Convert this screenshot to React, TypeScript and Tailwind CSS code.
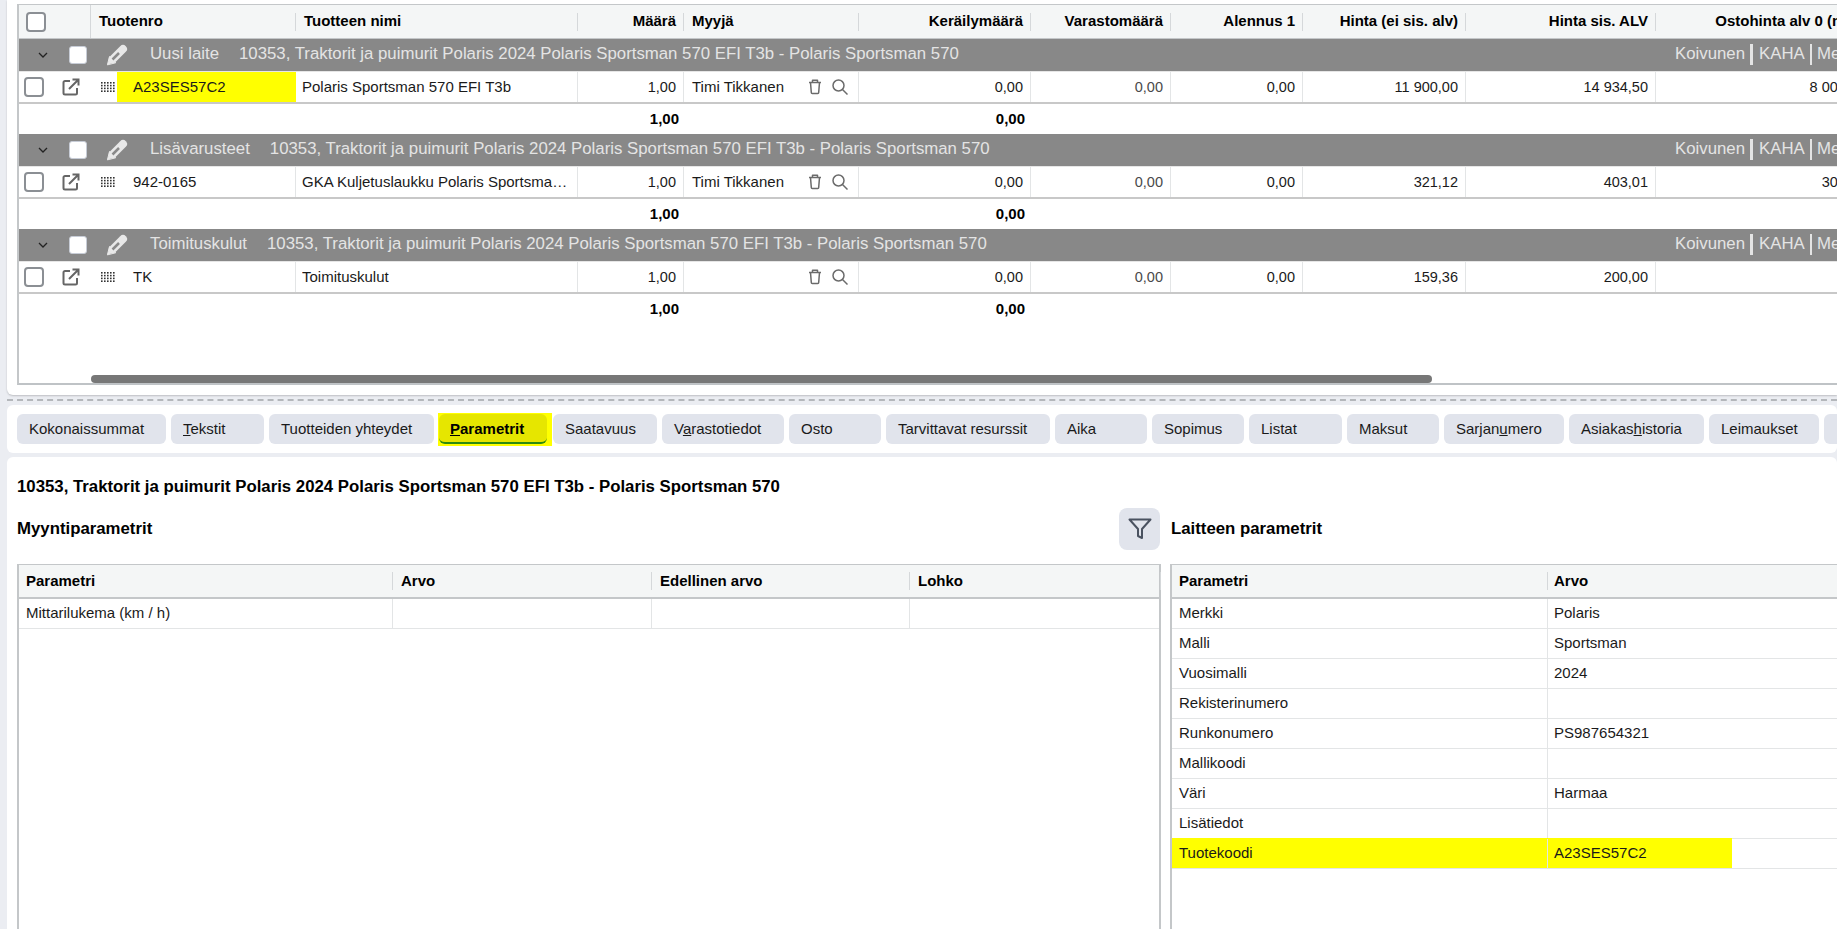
import type { ReactNode } from "react";

const topGrid =
  "grid grid-cols-[72px_205px_282px_106px_175px_172px_140px_132px_163px_190px_218px] w-[1855px]";
const leftGrid = "grid grid-cols-[374px_259px_258px_251px]";
const rightGrid = "grid grid-cols-[376px_1fr]";

const description = "10353, Traktorit ja puimurit Polaris 2024 Polaris Sportsman 570 EFI T3b - Polaris Sportsman 570";

const groups = [
  {
    label: "Uusi laite",
    code: "A23SES57C2",
    name: "Polaris Sportsman 570 EFI T3b",
    seller: "Timi Tikkanen",
    price: "11 900,00",
    gross: "14 934,50",
    cost: "8 000,00",
    mark: true,
  },
  {
    label: "Lisävarusteet",
    code: "942-0165",
    name: "GKA Kuljetuslaukku Polaris Sportsman 570",
    seller: "Timi Tikkanen",
    price: "321,12",
    gross: "403,01",
    cost: "300,00",
    mark: false,
  },
  {
    label: "Toimituskulut",
    code: "TK",
    name: "Toimituskulut",
    seller: "",
    price: "159,36",
    gross: "200,00",
    cost: "",
    mark: false,
  },
];

const tabs: { text: ReactNode; width: string; active?: boolean }[] = [
  { text: "Kokonaissummat", width: "w-[149px]" },
  { text: <><u>T</u>ekstit</>, width: "w-[93px]" },
  { text: "Tuotteiden yhteydet", width: "w-[165px]" },
  { text: <><u>P</u>arametrit</>, width: "w-[108px]", active: true },
  { text: "Saatavuus", width: "w-[104px]" },
  { text: <>V<u>a</u>rastotiedot</>, width: "w-[122px]" },
  { text: "Osto", width: "w-[92px]" },
  { text: "Tarvittavat resurssit", width: "w-[164px]" },
  { text: "Aika", width: "w-[92px]" },
  { text: "Sopimus", width: "w-[92px]" },
  { text: "Listat", width: "w-[93px]" },
  { text: "Maksut", width: "w-[92px]" },
  { text: <>Sarjan<u>u</u>mero</>, width: "w-[120px]" },
  { text: <>Asiakas<u>h</u>istoria</>, width: "w-[135px]" },
  { text: "Leimaukset", width: "w-[110px]" },
  { text: "", width: "w-[92px]" },
];

const deviceParams = [
  ["Merkki", "Polaris"],
  ["Malli", "Sportsman"],
  ["Vuosimalli", "2024"],
  ["Rekisterinumero", ""],
  ["Runkonumero", "PS987654321"],
  ["Mallikoodi", ""],
  ["Väri", "Harmaa"],
  ["Lisätiedot", ""],
  ["Tuotekoodi", "A23SES57C2"],
];

function Check({ white }: { white?: boolean }) {
  return (
    <span
      className={
        white
          ? "block w-[18px] h-[18px] rounded-[3px] bg-white border border-[#c7ccd6]"
          : "block w-5 h-5 rounded-[4px] bg-white border-2 border-[#8b8f94]"
      }
    />
  );
}

function Pencil() {
  return (
    <svg width="22" height="22" viewBox="0 0 22 22" fill="none" strokeLinecap="round">
      <path d="M1.500 20.500L3.500 12.500L9.500 18.500z" fill="#e8e8e8" stroke="#e8e8e8" strokeLinejoin="round" />
      <path d="M7 15L17 5" stroke="#e8e8e8" strokeWidth="8" />
      <path d="M6.500 15.500L13 9" stroke="#8a8a8a" strokeWidth="2.500" strokeLinecap="butt" />
    </svg>
  );
}

function LinkOut() {
  return (
    <svg width="18" height="18" viewBox="0 0 18 18" fill="none" stroke="#666" strokeWidth="2">
      <path d="M8 3H3a1.500 1.500 0 0 0-1.500 1.500v10.500A1.500 1.500 0 0 0 3 16.500h10.500A1.500 1.500 0 0 0 15 15v-5" />
      <path d="M7 11L16 2M10.500 1.500h6v6" />
    </svg>
  );
}

function Grip() {
  return (
    <svg width="14" height="10" viewBox="0 0 14 10" fill="#333">
      {[0, 3, 6, 9, 12].map((x) =>
        [0, 2.800, 5.600, 8.400].map((y) => <rect key={`${x}-${y}`} x={x} y={y} width="1.600" height="1.600" />)
      )}
    </svg>
  );
}

function Trash() {
  return (
    <svg width="14" height="16" viewBox="0 0 14 16" fill="none" stroke="#6b6b6b" strokeWidth="1.500" strokeLinejoin="round">
      <path d="M1 3.500h12M4.500 3.500V1.200h5v2.300M2.500 3.500l.8 10a1 1 0 0 0 1 1h5.400a1 1 0 0 0 1-1l.8-10" />
    </svg>
  );
}

function Search() {
  return (
    <svg width="16" height="16" viewBox="0 0 16 16" fill="none" stroke="#6b6b6b" strokeWidth="1.500">
      <circle cx="6.500" cy="6.500" r="5.500" />
      <path d="M10.500 10.500L15.500 15.500" />
    </svg>
  );
}

function Funnel() {
  return (
    <svg width="24" height="22" viewBox="0 0 24 22" fill="none" stroke="#4a5260" strokeWidth="2" strokeLinejoin="round">
      <path d="M1.500 1.500h21L14 11v9l-4-2V11z" />
    </svg>
  );
}

function GroupBlock({ group }: { group: (typeof groups)[number] }) {
  const cell = "h-[30px] flex items-center border-r border-[#e3e5e6] text-[15px] text-[#1a1a1a]";
  const num = "h-[30px] flex items-center justify-end pr-[7px] pt-[1px] border-r border-[#e3e5e6] text-[14.5px] text-[#1a1a1a]";
  return (
    <div>
      <div className="h-[32px] w-[1855px] bg-[#888888] flex items-center text-[#e4e4e4] text-[16.8px]">
        <span className="w-[20px] ml-[19px] mr-[11px] flex justify-start">
          <svg width="10" height="6" viewBox="0 0 10 6" fill="none" stroke="#222" strokeWidth="1.300">
            <path d="M1 1l4 4 4-4" />
          </svg>
        </span>
        <Check white />
        <span className="ml-[19px] mr-[22px]">
          <Pencil />
        </span>
        <span className="mr-[20px] pb-[2px]">{group.label}</span>
        <span className="pb-[2px]">{description}</span>
        <span className="ml-auto flex items-center w-[199px] pb-[2px]">
          <span className="w-[75px]">Koivunen</span>
          <span className="h-[21px] w-[3px] bg-[#e4e4e4] mr-[6px]" />
          <span className="w-[51px]">KAHA</span>
          <span className="h-[21px] w-[2px] bg-[#e4e4e4] mr-[5px]" />
          <span>Merkki</span>
        </span>
      </div>
      <div className={`${topGrid} bg-white border-t border-[#e6e6e6] border-b-2 border-b-[#c8c8c8]`}>
        <div className="h-[30px] flex items-center pl-[5px] gap-[18px]">
          <Check />
          <LinkOut />
        </div>
        <div className={cell}>
          <span className="ml-[10px] mr-[2px]">
            <Grip />
          </span>
          <span
            className={
              group.mark
                ? "relative -mr-px bg-[#ffff00] h-[30px] flex-1 flex items-center pl-[16px]"
                : "flex-1 pl-[16px]"
            }
          >
            {group.code}
          </span>
        </div>
        <div className={`${cell} pl-[6px] pr-[8px]`}>
          <span className="truncate">{group.name}</span>
        </div>
        <div className={num}>1,00</div>
        <div className={`${cell} pl-[8px] justify-between pr-[10px]`}>
          <span>{group.seller}</span>
          <span className="flex items-center gap-[10px]">
            <Trash />
            <Search />
          </span>
        </div>
        <div className={num}>0,00</div>
        <div className="h-[30px] flex items-center justify-end pr-[7px] pt-[1px] border-r border-[#e3e5e6] text-[14.5px] text-[#4a4a4a]">0,00</div>
        <div className={num}>0,00</div>
        <div className={num}>{group.price}</div>
        <div className={num}>{group.gross}</div>
        <div className={num}>{group.cost}</div>
      </div>
      <div className={`${topGrid} h-[30px] items-center font-bold text-[15px] text-black`}>
        <span className="col-start-4 text-right pr-[5px]">1,00</span>
        <span className="col-start-6 text-right pr-[6px]">0,00</span>
      </div>
    </div>
  );
}

function HeaderCell({
  children,
  right,
  noLine,
  short,
  pad = "pl-[8px]",
}: {
  children?: ReactNode;
  right?: boolean;
  noLine?: boolean;
  short?: boolean;
  pad?: string;
}) {
  return (
    <div className={`${short ? "h-[32px]" : "h-[33px]"} flex items-center`}>
      <span className={`flex-1 whitespace-nowrap overflow-hidden ${right ? "text-right pr-[7px]" : pad}`}>
        {children}
      </span>
      {!noLine && <span className="h-[18px] w-px bg-[#d5d8da] shrink-0" />}
    </div>
  );
}

export default function App() {
  return (
    <div className="h-[929px] w-full overflow-hidden bg-[#ebedf2] pl-[7px] font-['Liberation_Sans',Arial,sans-serif] text-[15px] text-[#1a1a1a]">
      {/* orders panel */}
      <div className="h-[395px] bg-white rounded-bl-[6px] pl-[10px] pt-[4px] pb-[10px] shadow-[0_1px_2px_rgba(0,0,0,0.2)]">
        <div className="h-[381px] relative overflow-hidden border-t border-t-[#c4c7c9] border-l-2 border-l-[#c4c7c9] border-b-2 border-b-[#bfc3c6]">
          <div className={`${topGrid} bg-[#f4f6f6] border-b border-b-[#c4c7c9] font-bold text-[15px] text-black`}>
            <div className="h-[33px] flex items-center pl-[7px] border-r border-[#d5d8da]">
              <Check />
            </div>
            <HeaderCell>Tuotenro</HeaderCell>
            <HeaderCell>Tuotteen nimi</HeaderCell>
            <HeaderCell right>Määrä</HeaderCell>
            <HeaderCell>Myyjä</HeaderCell>
            <HeaderCell right>Keräilymäärä</HeaderCell>
            <HeaderCell right>Varastomäärä</HeaderCell>
            <HeaderCell right>Alennus 1</HeaderCell>
            <HeaderCell right>Hinta (ei sis. alv)</HeaderCell>
            <HeaderCell right>Hinta sis. ALV</HeaderCell>
            <HeaderCell right noLine>Ostohinta alv 0 (myy)</HeaderCell>
          </div>
          {groups.map((group) => (
            <GroupBlock key={group.label} group={group} />
          ))}
          <div className="absolute left-[72px] bottom-0 w-[1341px] h-[8px] rounded-[4px] bg-[#777777]" />
        </div>
      </div>

      {/* splitter */}
      <div className="h-[10px] flex items-center">
        <div className="w-full border-t-2 border-dashed border-[#b4b7bb]" />
      </div>

      {/* tabs */}
      <div className="h-[48px] bg-white rounded-[6px] pl-[10px] pt-[9px] flex items-start gap-[5px] overflow-hidden">
        {tabs.map((tab, i) =>
          tab.active ? (
            <div key={i} className="bg-[#ffff00] -mt-[1px] -ml-[1px] -mr-[4px] h-[33px] pl-[1px] pr-[5px] pt-[1px] shrink-0">
              <div className={`${tab.width} h-[30px] rounded-[6px] bg-[#e6e600] border-b-2 border-b-[#2c8a10] pl-[11px] pt-[2px] flex items-center font-bold text-black`}>
                <span>{tab.text}</span>
              </div>
            </div>
          ) : (
            <div
              key={i}
              className={`${tab.width} h-[30px] shrink-0 rounded-[6px] bg-[#e1e4ec] pl-[12px] flex items-center whitespace-nowrap`}
            >
              <span>{tab.text}</span>
            </div>
          )
        )}
      </div>

      {/* parameters */}
      <div className="h-[472px] mt-[4px] bg-white rounded-t-[6px] pl-[10px] overflow-hidden">
        <h2 className="h-[17px] mt-[21px] flex items-center text-[16.8px] font-bold text-black whitespace-nowrap">{description}</h2>
        <div className="mt-[13px] flex items-center h-[42px]">
          <div className="w-[1102px] text-[16.8px] font-bold text-black">Myyntiparametrit</div>
          <button className="w-[41px] h-[42px] rounded-[8px] bg-[#e1e4ec] flex items-center justify-center">
            <Funnel />
          </button>
          <div className="ml-[11px] text-[16.8px] font-bold text-black">Laitteen parametrit</div>
        </div>
        <div className="mt-[14px] flex gap-[9px]">
          <div className="w-[1144px] h-[400px] border border-[#c4c7c9] border-l-2 border-r-2">
            <div className={`${leftGrid} bg-[#f4f6f6] border-b-2 border-b-[#c4c7c9] font-bold text-black`}>
              <HeaderCell short pad="pl-[7px]">Parametri</HeaderCell>
              <HeaderCell short>Arvo</HeaderCell>
              <HeaderCell short>Edellinen arvo</HeaderCell>
              <HeaderCell short>Lohko</HeaderCell>
            </div>
            <div className={`${leftGrid} border-b border-b-[#e3e5e6]`}>
              <div className="h-[29px] pl-[7px] flex items-center border-r border-[#e3e5e6]">Mittarilukema (km / h)</div>
              <div className="border-r border-[#e3e5e6]" />
              <div className="border-r border-[#e3e5e6]" />
              <div />
            </div>
          </div>
          <div className="flex-1 h-[400px] border-t border-t-[#c4c7c9] border-l-2 border-l-[#c4c7c9]">
            <div className={`${rightGrid} bg-[#f4f6f6] border-b-2 border-b-[#c4c7c9] font-bold text-black`}>
              <HeaderCell short pad="pl-[7px]">Parametri</HeaderCell>
              <HeaderCell short noLine pad="pl-[6px]">Arvo</HeaderCell>
            </div>
            {deviceParams.map(([name, value]) => {
              const marked = name === "Tuotekoodi";
              return (
                <div key={name} className={`${rightGrid} relative border-b border-b-[#e3e5e6]`}>
                  {marked && <div className="absolute left-0 -top-px bottom-0 w-[560px] bg-[#ffff00]" />}
                  <div className="relative h-[29px] pl-[7px] flex items-center border-r border-[#e3e5e6]">{name}</div>
                  <div className="relative h-[29px] pl-[6px] flex items-center">{value}</div>
                </div>
              );
            })}
          </div>
        </div>
      </div>
    </div>
  );
}
